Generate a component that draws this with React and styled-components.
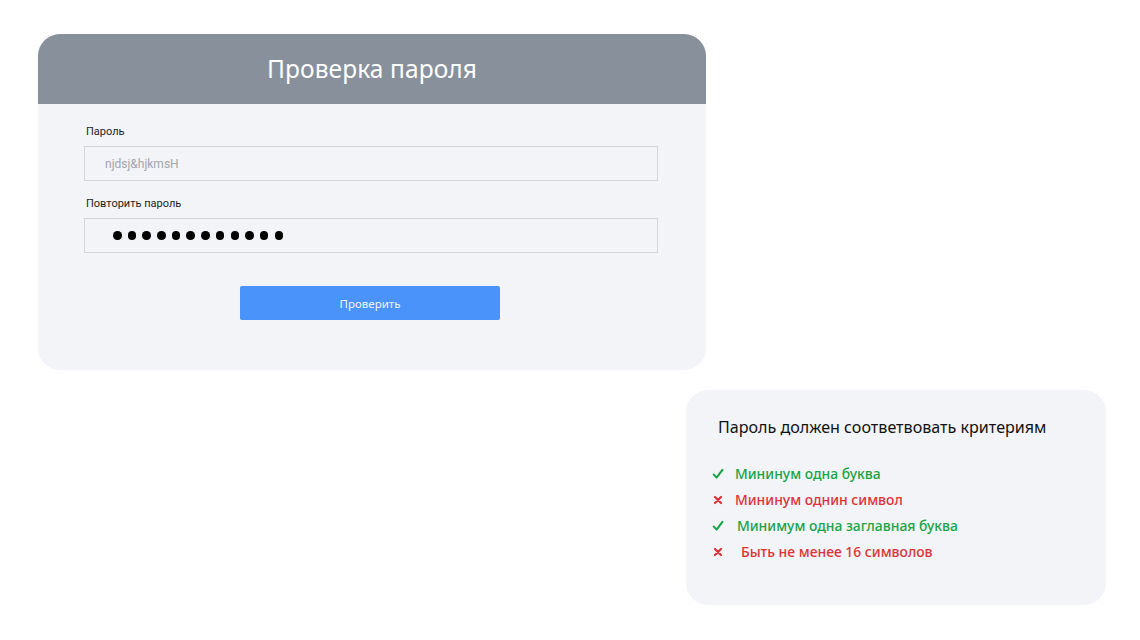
import React, { useState } from 'react';
import styled, { createGlobalStyle } from 'styled-components';

const GlobalStyle = createGlobalStyle`
  html, body {
    margin: 0;
    padding: 0;
    background: #ffffff;
  }
  * {
    box-sizing: border-box;
  }
`;

const Page = styled.div`
  width: 1140px;
  height: 640px;
  padding: 34px 0 0 38px;
  display: flex;
  flex-direction: column;
  gap: 20px;
`;

const Card = styled.div`
  width: 668px;
  height: 336px;
  border-radius: 22px;
  overflow: hidden;
  background: #f2f4f8;
  display: flex;
  flex-direction: column;
`;

const Header = styled.div`
  height: 70px;
  background: #87909b;
  display: flex;
  align-items: center;
  justify-content: center;
  padding-bottom: 2px;

  h1 {
    margin: 0;
    color: #ffffff;
    font-family: "Noto Sans", "Open Sans", sans-serif;
    font-weight: 400;
    font-size: 24.5px;
    letter-spacing: 0.1px;
  }
`;

const Form = styled.div`
  padding: 20px 48px 0 46px;
  display: flex;
  flex-direction: column;
`;

const Label = styled.label`
  font-family: Roboto, "Liberation Sans", sans-serif;
  font-size: 11px;
  color: #1d1d1f;
  margin: 1px 0 7px 2px;
  line-height: 14px;
`;

const Field = styled.div`
  height: 35px;
  border: 1px solid #d3d5d9;
  background: #f2f4f8;
  display: flex;
  align-items: center;
  padding-left: ${p => (p.$dots ? '28px' : '20px')};
  margin-bottom: ${p => p.$mb || 0}px;
  font-family: Roboto, "Liberation Sans", sans-serif;
  font-size: 12px;
  color: #a2a5aa;
`;

const Dots = styled.div`
  display: flex;
  gap: 6.1px;

  span {
    width: 8.6px;
    height: 8.6px;
    border-radius: 50%;
    background: #000;
  }
`;

const ButtonRow = styled.div`
  display: flex;
  justify-content: center;
  padding-top: 33px;
  padding-right: 2px;
`;

const Button = styled.button`
  width: 260px;
  height: 34px;
  border: none;
  border-radius: 2px;
  background: #4a93fb;
  color: #eef4ff;
  font-family: "Noto Sans", "Open Sans", sans-serif;
  font-size: 11.5px;
  cursor: pointer;
`;

const Criteria = styled.div`
  margin-left: 648px;
  width: 420px;
  height: 215px;
  border-radius: 22px;
  background: #f2f4f8;
  padding: 27px 0 0 26px;
  font-family: "Noto Sans", "Open Sans", sans-serif;

  h2 {
    margin: 0 0 27px 6px;
    font-size: 16.1px;
    font-weight: 400;
    color: #111;
    line-height: 20px;
  }
`;

const List = styled.ul`
  list-style: none;
  margin: 0;
  padding: 0;
  display: flex;
  flex-direction: column;
  gap: 7px;
`;

const Item = styled.li`
  display: flex;
  align-items: center;
  height: 19px;
  font-size: 13.9px;
  font-weight: 500;
  color: ${p => (p.$ok ? '#19a345' : '#dd3236')};

  svg {
    width: 12px;
    height: 12px;
    flex-shrink: 0;
    margin-right: ${p => p.$gap}px;
  }
`;

const Check = () => (
  <svg viewBox="0 0 12 12">
    <path d="M1.8 6.6 L4.6 9.6 L10.4 1.8" fill="none" stroke="currentColor" strokeWidth="2.1" strokeLinecap="round" strokeLinejoin="round" />
  </svg>
);

const Cross = () => (
  <svg viewBox="0 0 12 12">
    <path d="M3 3 L9 9 M9 3 L3 9" fill="none" stroke="currentColor" strokeWidth="2.2" strokeLinecap="round" />
  </svg>
);

const rules = [
  { text: 'Мининум одна буква', ok: true, gap: 11 },
  { text: 'Мининум однин символ', ok: false, gap: 11 },
  { text: 'Минимум одна заглавная буква', ok: true, gap: 13 },
  { text: 'Быть не менее 16 символов', ok: false, gap: 17 },
];

export default function App() {
  const [dots] = useState(12);

  return (
    <>
      <GlobalStyle />
      <Page>
        <Card>
          <Header>
            <h1>Проверка пароля</h1>
          </Header>
          <Form>
            <Label>Пароль</Label>
            <Field $mb={15}>njdsj&amp;hjkmsH</Field>
            <Label>Повторить пароль</Label>
            <Field $dots>
              <Dots>
                {Array.from({ length: dots }).map((_, i) => (
                  <span key={i} />
                ))}
              </Dots>
            </Field>
            <ButtonRow>
              <Button>Проверить</Button>
            </ButtonRow>
          </Form>
        </Card>
        <Criteria>
          <h2>Пароль должен соответвовать критериям</h2>
          <List>
            {rules.map(r => (
              <Item key={r.text} $ok={r.ok} $gap={r.gap}>
                {r.ok ? <Check /> : <Cross />}
                {r.text}
              </Item>
            ))}
          </List>
        </Criteria>
      </Page>
    </>
  );
}
